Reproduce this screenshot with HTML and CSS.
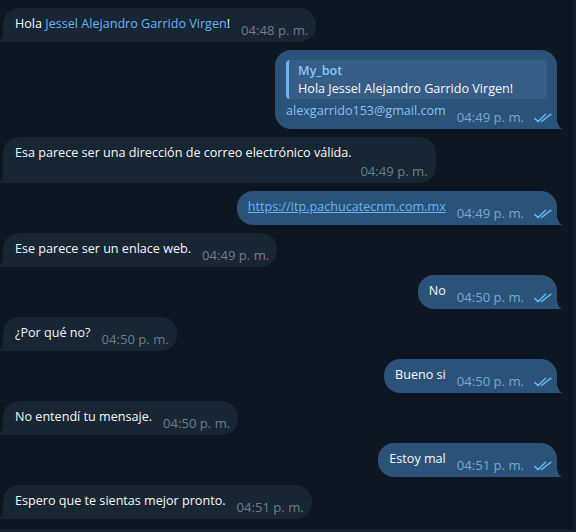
FILE: index.html
```html
<!DOCTYPE html>
<html lang="es">
<head>
<meta charset="utf-8">
<link rel="stylesheet" href="styles.css">
</head>
<body>
<div class="chat">
  <div class="row in">
    <div class="bubble">
      <span class="text">Hola <span class="mention">Jessel Alejandro Garrido Virgen</span>!</span>
      <span class="meta"><span class="time">04:48 p. m.</span></span>
    </div>
  </div>

  <div class="row out">
    <div class="bubble reply">
      <div class="quote">
        <div class="quote-name">My_bot</div>
        <div class="quote-text">Hola Jessel Alejandro Garrido Virgen!</div>
      </div>
      <div class="line">
        <span class="text email">alexgarrido153@gmail.com</span>
        <span class="meta"><span class="time">04:49 p. m.</span><svg class="check" viewBox="0 0 18 10" width="18" height="10"><path d="M1 5.6 L4 8.6 L11.6 1.2 M7.4 8.6 L17 1.2" fill="none" stroke="currentColor" stroke-width="1.5" stroke-linecap="round" stroke-linejoin="round"/></svg></span>
      </div>
    </div>
  </div>

  <div class="row in">
    <div class="bubble multi">
      <span class="text">Esa parece ser una dirección de correo electrónico válida.</span>
      <span class="meta"><span class="time">04:49 p. m.</span></span>
    </div>
  </div>

  <div class="row out">
    <div class="bubble">
      <span class="text"><span class="link">https://itp.pachucatecnm.com.mx</span></span>
      <span class="meta"><span class="time">04:49 p. m.</span><svg class="check" viewBox="0 0 18 10" width="18" height="10"><path d="M1 5.6 L4 8.6 L11.6 1.2 M7.4 8.6 L17 1.2" fill="none" stroke="currentColor" stroke-width="1.5" stroke-linecap="round" stroke-linejoin="round"/></svg></span>
    </div>
  </div>

  <div class="row in">
    <div class="bubble">
      <span class="text">Ese parece ser un enlace web.</span>
      <span class="meta"><span class="time">04:49 p. m.</span></span>
    </div>
  </div>

  <div class="row out">
    <div class="bubble">
      <span class="text">No</span>
      <span class="meta"><span class="time">04:50 p. m.</span><svg class="check" viewBox="0 0 18 10" width="18" height="10"><path d="M1 5.6 L4 8.6 L11.6 1.2 M7.4 8.6 L17 1.2" fill="none" stroke="currentColor" stroke-width="1.5" stroke-linecap="round" stroke-linejoin="round"/></svg></span>
    </div>
  </div>

  <div class="row in">
    <div class="bubble">
      <span class="text">¿Por qué no?</span>
      <span class="meta"><span class="time">04:50 p. m.</span></span>
    </div>
  </div>

  <div class="row out">
    <div class="bubble">
      <span class="text">Bueno si</span>
      <span class="meta"><span class="time">04:50 p. m.</span><svg class="check" viewBox="0 0 18 10" width="18" height="10"><path d="M1 5.6 L4 8.6 L11.6 1.2 M7.4 8.6 L17 1.2" fill="none" stroke="currentColor" stroke-width="1.5" stroke-linecap="round" stroke-linejoin="round"/></svg></span>
    </div>
  </div>

  <div class="row in">
    <div class="bubble">
      <span class="text">No entendí tu mensaje.</span>
      <span class="meta"><span class="time">04:50 p. m.</span></span>
    </div>
  </div>

  <div class="row out">
    <div class="bubble">
      <span class="text">Estoy mal</span>
      <span class="meta"><span class="time">04:51 p. m.</span><svg class="check" viewBox="0 0 18 10" width="18" height="10"><path d="M1 5.6 L4 8.6 L11.6 1.2 M7.4 8.6 L17 1.2" fill="none" stroke="currentColor" stroke-width="1.5" stroke-linecap="round" stroke-linejoin="round"/></svg></span>
    </div>
  </div>

  <div class="row in">
    <div class="bubble">
      <span class="text">Espero que te sientas mejor pronto.</span>
      <span class="meta"><span class="time">04:51 p. m.</span></span>
    </div>
  </div>
</div>
</body>
</html>
```

FILE: styles.css
```css
* { box-sizing: border-box; }

html, body {
  margin: 0;
  padding: 0;
  width: 576px;
  height: 532px;
  overflow: hidden;
  background: #0e1621;
}

body {
  font-family: "Open Sans", "Noto Sans", sans-serif;
  font-size: 12.6px;
  color: #f8f8f8;
}

.chat {
  height: 532px;
  display: flex;
  flex-direction: column;
  gap: 8px;
  padding: 8px 3px 0 3px;
  border-right: 3px solid #151e29;
  border-bottom: 3px solid #151e29;
}

.row {
  display: flex;
}

.row.in { justify-content: flex-start; }
.row.out { justify-content: flex-end; padding-right: 13px; }

.bubble {
  position: relative;
  display: flex;
  align-items: flex-start;
  padding: 7px 8px 3px 12px;
  border-radius: 16px;
  line-height: 18px;
}

.in .bubble {
  background: #182533;
  border-bottom-left-radius: 0;
}

.in .bubble::after {
  content: "";
  position: absolute;
  left: -6px;
  bottom: 0;
  width: 6px;
  height: 10px;
  background: radial-gradient(ellipse 6px 10px at 0 0, transparent 97%, #182533 100%);
}

.out .bubble {
  background: #2b5278;
  border-bottom-right-radius: 0;
  padding: 7px 5px 3px 11px;
}

.out .bubble::after {
  content: "";
  position: absolute;
  right: -6px;
  bottom: 0;
  width: 6px;
  height: 10px;
  background: radial-gradient(ellipse 6px 10px at 100% 0, transparent 97%, #2b5278 100%);
}

.text {
  white-space: nowrap;
}

.mention { color: #6ab3f3; }

.link {
  color: #6ab3f3;
  text-decoration: underline;
}

.email { color: #86c2f2; }

.meta {
  display: flex;
  align-items: center;
  gap: 10px;
  margin-top: 7px;
  margin-left: 11px;
  line-height: 17px;
  font-size: 13.1px;
  white-space: nowrap;
}

.in .time { color: #6d7f8f; }
.out .time { color: #7da8d3; }

.check {
  color: #64b5ef;
  display: block;
}

.bubble.multi {
  flex-direction: column;
  align-items: stretch;
  padding-bottom: 3px;
}

.bubble.multi .text {
  padding-right: 76px;
}

.bubble.multi .meta {
  align-self: flex-end;
  margin-top: 1px;
}

.bubble.reply {
  flex-direction: column;
  align-items: stretch;
  padding: 10px 5px 3px 11px;
}

.quote {
  margin-right: 5px;
  margin-bottom: 3px;
  padding: 2px 8px 1px 9px;
  border-left: 3px solid #6ab2f2;
  border-radius: 4px;
  background: #355d86;
}

.quote-name {
  color: #86c6f8;
  font-weight: 600;
}

.quote-text {
  white-space: nowrap;
}

.line {
  display: flex;
  align-items: flex-start;
}
```
